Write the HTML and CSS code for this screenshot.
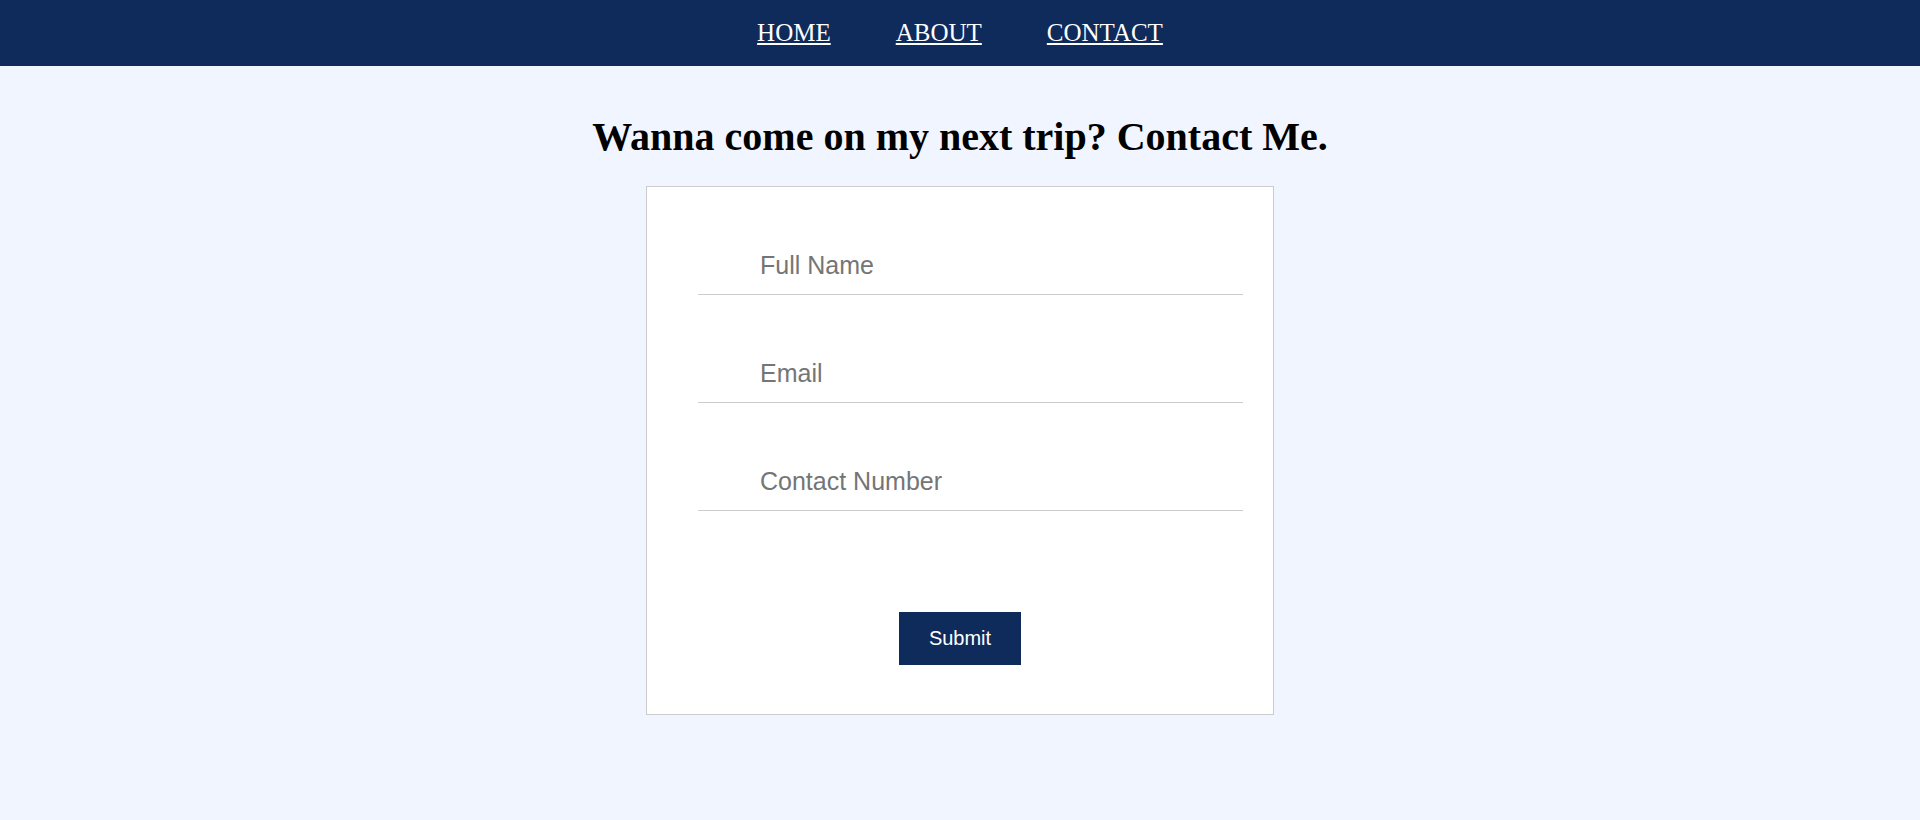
FILE: index.html
```html
<!DOCTYPE html>
<html lang="en">
<head>
<meta charset="utf-8">
<title>Contact Me</title>
<link rel="stylesheet" href="styles.css">
</head>
<body>
<nav class="navbar">
  <a class="nav-link" href="#">HOME</a>
  <a class="nav-link" href="#">ABOUT</a>
  <a class="nav-link" href="#">CONTACT</a>
</nav>
<main class="page">
  <h1 class="title">Wanna come on my next trip? Contact Me.</h1>
  <form class="card">
    <input class="field" type="text" placeholder="Full Name">
    <input class="field" type="email" placeholder="Email">
    <input class="field" type="tel" placeholder="Contact Number">
    <button class="submit" type="button">Submit</button>
  </form>
</main>
</body>
</html>
```

FILE: styles.css
```css
html, body {
  margin: 0;
  padding: 0;
}

body {
  background: #f0f5ff;
  font-family: "Liberation Serif", "Times New Roman", serif;
  min-height: 820px;
}

.navbar {
  height: 66px;
  background: #0f2b5c;
  display: flex;
  justify-content: center;
  align-items: center;
  gap: 65px;
}

.nav-link {
  color: #ffffff;
  font-family: "Liberation Serif", "Times New Roman", serif;
  font-size: 25px;
  text-decoration: underline;
}

.page {
  display: flex;
  flex-direction: column;
  align-items: center;
  padding-top: 48px;
}

.title {
  margin: 0 0 26px 0;
  font-size: 40px;
  font-weight: bold;
  color: #000;
  line-height: 46px;
  text-align: center;
}

.card {
  box-sizing: border-box;
  width: 628px;
  height: 529px;
  background: #ffffff;
  border: 1px solid #cccccc;
  padding: 47px 0 49px 51px;
  display: flex;
  flex-direction: column;
  gap: 47px;
}

.field {
  box-sizing: border-box;
  display: block;
  width: 545px;
  height: 61px;
  margin: 0;
  padding: 2px 10px 0 62px;
  border: none;
  border-bottom: 1px solid #cccccc;
  background: transparent;
  font-family: "Liberation Sans", Arial, sans-serif;
  font-size: 25px;
  color: #333;
  outline: none;
}

.field::placeholder {
  color: #757575;
}

.submit {
  align-self: center;
  margin: 54px 0 0 -51px;
  width: 122px;
  height: 53px;
  border: none;
  background: #0f2b5c;
  color: #ffffff;
  font-family: "Liberation Sans", Arial, sans-serif;
  font-size: 20px;
  cursor: pointer;
}
```
